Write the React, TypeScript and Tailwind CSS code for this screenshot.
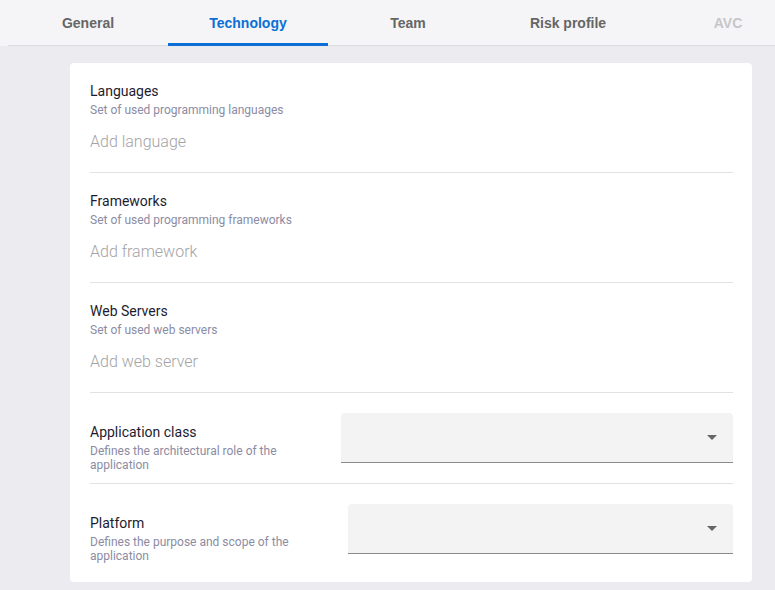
const tabs = [
  { label: "General", state: "idle" },
  { label: "Technology", state: "active" },
  { label: "Team", state: "idle" },
  { label: "Risk profile", state: "idle" },
  { label: "AVC", state: "disabled" },
];

const listSections = [
  { title: "Languages", hint: "Set of used programming languages", placeholder: "Add language" },
  { title: "Frameworks", hint: "Set of used programming frameworks", placeholder: "Add framework" },
  { title: "Web Servers", hint: "Set of used web servers", placeholder: "Add web server" },
];

const SelectBox = () => (
  <div className="flex-1 h-[50px] bg-[#f3f3f3] rounded-t-[4px] border-b border-[#8a8a8a] flex items-center justify-end pr-[16px]">
    <svg width="10" height="5" viewBox="0 0 10 5">
      <path d="M0 0 L10 0 L5 5 Z" fill="#666" />
    </svg>
  </div>
);

export default function App() {
  return (
    <div className="min-h-[590px] bg-[#ebebf0] font-['Roboto',sans-serif] overflow-hidden">
      {/* Tabs */}
      <div className="bg-[#f5f5f7] pl-2">
        <div className="flex border-b border-[#dcdcdf] h-[46px]">
          {tabs.map((tab) => (
            <div
              key={tab.label}
              className={`w-[160px] shrink-0 flex items-end justify-center font-['Liberation_Sans',Arial,sans-serif] font-bold text-[14px] leading-[16px] ${
                tab.state === "active"
                  ? "text-[#0b6fd6] border-b-[3px] border-[#0b6fd6] pb-[12px] -mb-px"
                  : tab.state === "disabled"
                  ? "text-[#c6c6c8] pb-[14px]"
                  : "text-[#666666] pb-[14px]"
              }`}
            >
              {tab.label}
            </div>
          ))}
        </div>
      </div>

      {/* Card */}
      <div className="ml-[70px] mt-[17px] w-[682px] bg-white rounded-[4px] pl-[20px] pr-[19px] pb-[8px]">
        {listSections.map((s) => (
          <div key={s.title} className="pt-[18px] pb-[18px] border-b border-[#e2e2e4]">
            <div className="text-[14px] leading-[20px] text-[#1c1c30]">{s.title}</div>
            <div className="text-[12px] leading-[18px] text-[#8b8ca3]">{s.hint}</div>
            <div className="mt-[11px] text-[16px] leading-[24px] text-[#a3a3a6] font-light">{s.placeholder}</div>
          </div>
        ))}

        <div className="flex items-start h-[91px] pt-[20px] border-b border-[#e2e2e4]">
          <div className="w-[251px] pr-[20px] pt-[9px]">
            <div className="text-[14px] leading-[20px] text-[#1c1c30]">Application class</div>
            <div className="mt-[2px] text-[12px] leading-[14px] text-[#8b8ca3]">
              Defines the architectural role of the application
            </div>
          </div>
          <SelectBox />
        </div>

        <div className="flex items-start h-[90px] pt-[20px]">
          <div className="w-[258px] pr-[27px] pt-[9px]">
            <div className="text-[14px] leading-[20px] text-[#1c1c30]">Platform</div>
            <div className="mt-[2px] text-[12px] leading-[14px] text-[#8b8ca3]">
              Defines the purpose and scope of the application
            </div>
          </div>
          <SelectBox />
        </div>
      </div>
    </div>
  );
}
